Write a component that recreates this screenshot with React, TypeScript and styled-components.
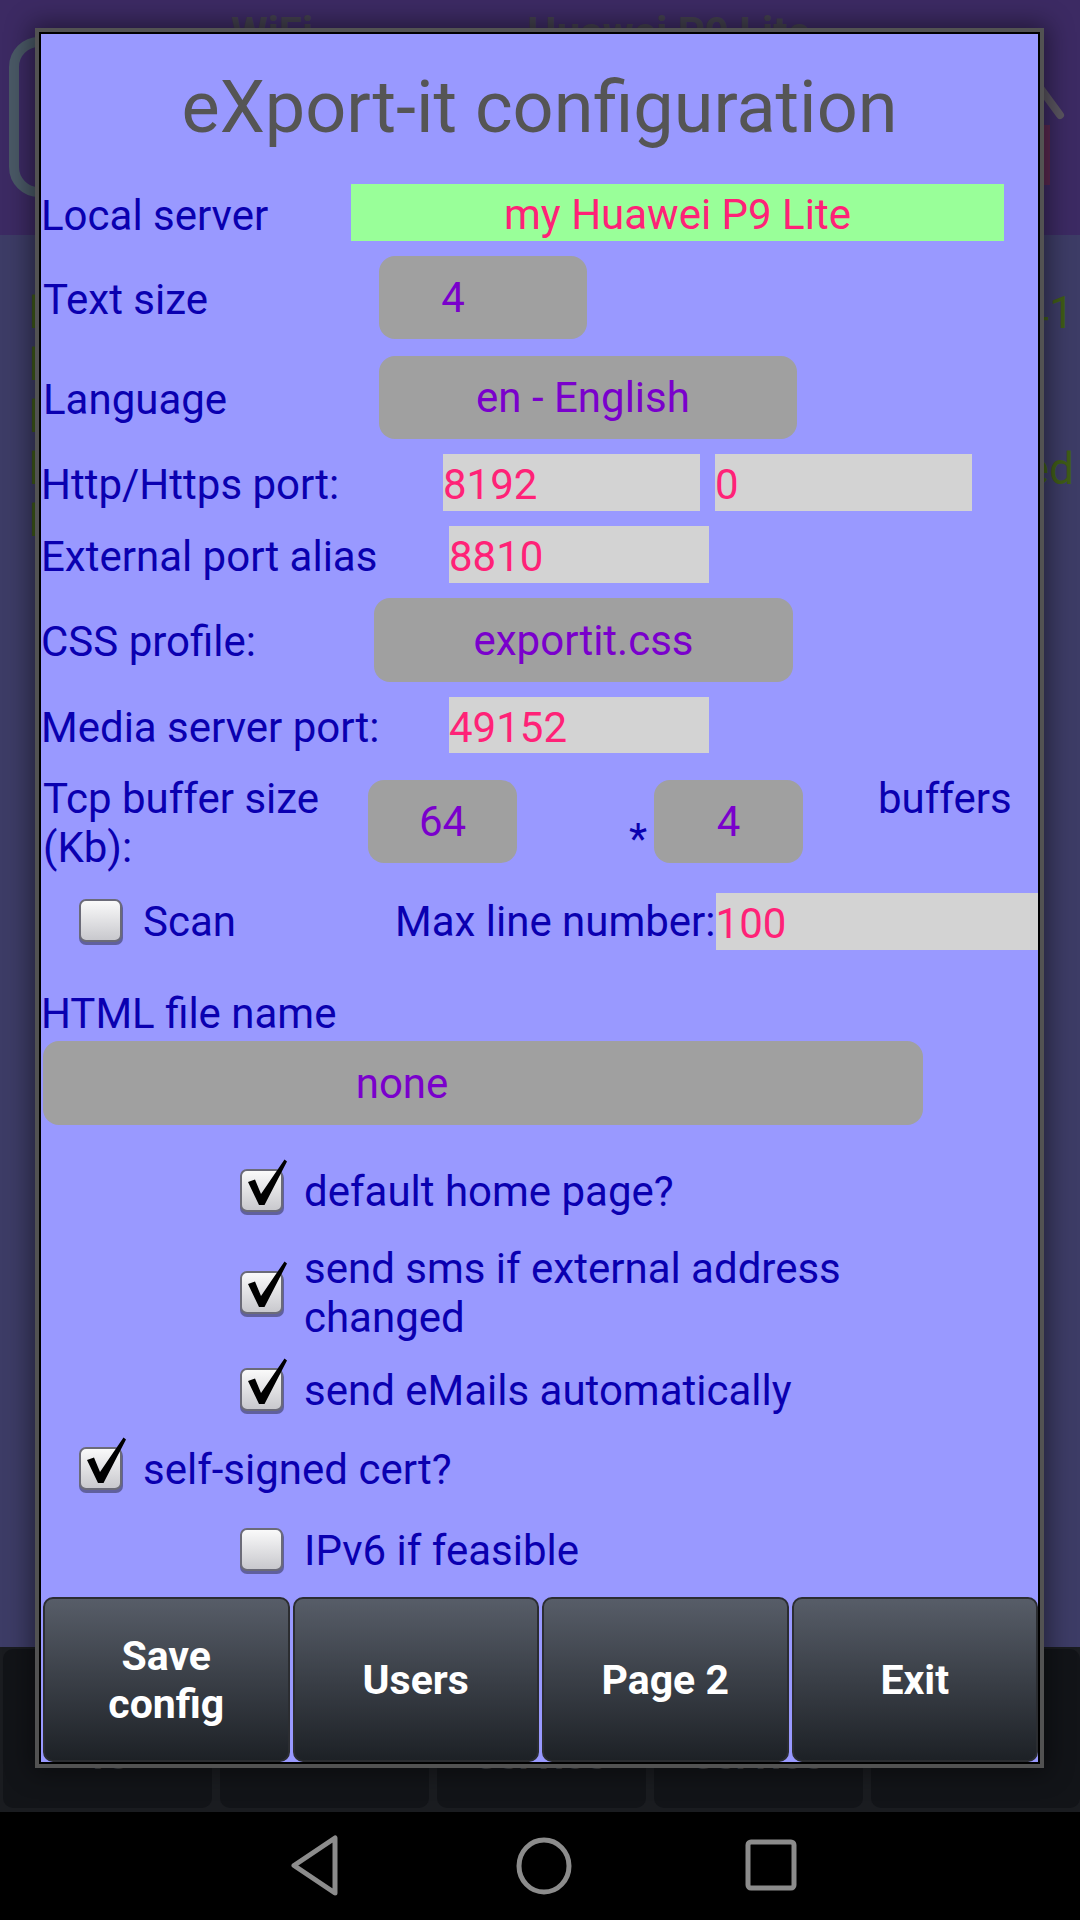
import React from "react";
import styled, { createGlobalStyle } from "styled-components";

const GlobalStyle = createGlobalStyle`
  html, body { margin: 0; padding: 0; background: #000; }
  body { font-family: Roboto, "Liberation Sans", sans-serif; }
  * { box-sizing: border-box; }
`;

const Screen = styled.div`
  position: relative;
  width: 1080px;
  height: 1920px;
  overflow: hidden;
  display: flex;
  flex-direction: column;
  font-family: Roboto, "Liberation Sans", sans-serif;
`;

/* ---------- background app (dimmed) ---------- */
const TopBar = styled.div`
  height: 235px;
  flex: none;
  background: #3c2a63;
  display: flex;
  align-items: flex-start;
  padding-left: 9px;
`;

const LogoBox = styled.div`
  margin-top: 37px;
  width: 130px;
  height: 160px;
  border: 10px solid #4a5966;
  border-radius: 30px;
`;

const TopText = styled.div<{ $ml: number }>`
  margin-left: ${(p) => p.$ml}px;
  margin-top: 8px;
  font-size: 42px;
  line-height: 50px;
  font-weight: 700;
  color: #413f4c;
`;

const TopIcon = styled.svg`
  margin-left: auto;
  margin-top: 55px;
  margin-right: 10px;
`;

const ContentArea = styled.div`
  flex: 1;
  background: #3d3c66;
  padding-top: 52px;
`;

const GhostLine = styled.div`
  display: flex;
  justify-content: space-between;
  padding: 0 6px 0 29px;
  font-size: 44px;
  line-height: 52px;
  height: 52px;
  color: #3f5c17;
`;

const BottomBar = styled.div`
  height: 165px;
  flex: none;
  background: #1a1c20;
  display: flex;
  gap: 8px;
  padding: 2px 0 4px 3px;
`;

const Tile = styled.div`
  flex: 1;
  background: #121418;
  border-radius: 10px;
  padding-top: 83px;
  text-align: center;
  font-size: 40px;
  font-weight: 700;
  line-height: 48px;
  color: #3c3d40;
`;

const NavBar = styled.div`
  height: 108px;
  flex: none;
  background: #000;
  display: flex;
  align-items: center;
  justify-content: center;
  gap: 170px;
  padding-left: 8px;
`;

/* ---------- dialog ---------- */
const Dialog = styled.div`
  position: absolute;
  left: 39px;
  top: 32px;
  width: 1001px;
  height: 1732px;
  border: 2px solid #000;
  background: #9999ff;
  box-shadow: 0 0 0 4px #525252, 0 0 24px 8px rgba(0, 0, 0, 0.45);
  display: flex;
  flex-direction: column;
  padding-top: 26px;
`;

const Title = styled.div`
  font-size: 72px;
  line-height: 96px;
  color: #555555;
  text-align: center;
`;

const Row = styled.div<{ $h: number; $mt: number; $top?: boolean }>`
  display: flex;
  align-items: ${(p) => (p.$top ? "flex-start" : "center")};
  height: ${(p) => p.$h}px;
  margin-top: ${(p) => p.$mt}px;
  flex: none;
`;

const Label = styled.div<{ $w?: number; $ml?: number; $pt?: number }>`
  ${(p) => (p.$w ? `width: ${p.$w}px; flex: none;` : "")}
  margin-left: ${(p) => p.$ml ?? 0}px;
  padding-top: ${(p) => p.$pt ?? 0}px;
  font-size: 42px;
  line-height: 49px;
  color: #0a00b0;
`;

const TextBox = styled.div<{ $w?: number; $bg: string; $center?: boolean; $ml?: number }>`
  ${(p) => (p.$w ? `width: ${p.$w}px; flex: none;` : "flex: 1;")}
  margin-left: ${(p) => p.$ml ?? 0}px;
  height: 100%;
  background: ${(p) => p.$bg};
  color: #ff2277;
  font-size: 42px;
  line-height: 49px;
  display: flex;
  align-items: center;
  padding-top: 4px;
  justify-content: ${(p) => (p.$center ? "center" : "flex-start")};
`;

const Spinner = styled.div<{ $w: number; $ml?: number; $pr?: number; $mt?: number; $h?: number }>`
  width: ${(p) => p.$w}px;
  height: ${(p) => (p.$h ? `${p.$h}px` : "100%")};
  flex: none;
  margin-left: ${(p) => p.$ml ?? 0}px;
  margin-top: ${(p) => p.$mt ?? 0}px;
  padding-right: ${(p) => p.$pr ?? 0}px;
  background: #a0a0a0;
  border-radius: 16px;
  color: #7a00cc;
  font-size: 42px;
  line-height: 49px;
  display: flex;
  align-items: center;
  justify-content: center;
`;

const Asterisk = styled.div`
  margin-left: 112px;
  margin-top: 44px;
  font-size: 42px;
  line-height: 42px;
  color: #0a00b0;
  width: 18px;
  flex: none;
`;

const CheckSvg = styled.svg<{ $ml: number }>`
  flex: none;
  overflow: visible;
  margin-left: ${(p) => p.$ml}px;
`;

const CheckText = styled.div`
  margin-left: 20px;
  font-size: 42px;
  line-height: 49px;
  color: #0a00b0;
`;

const ScanGroup = styled.div`
  width: 354px;
  flex: none;
  display: flex;
  align-items: center;
`;

const ButtonBar = styled.div`
  margin-top: auto;
  height: 165px;
  display: flex;
  gap: 3px;
  padding-left: 2px;
  flex: none;
`;

const DialogButton = styled.div`
  flex: 1;
  border: 2px solid #2b2d31;
  border-radius: 10px;
  background: linear-gradient(#575d68, #1d2126);
  color: #fff;
  font-weight: 700;
  font-size: 41px;
  line-height: 48px;
  display: flex;
  align-items: center;
  justify-content: center;
  text-align: center;
`;

const CheckIcon = ({ checked, ml }: { checked: boolean; ml: number }) => (
  <CheckSvg $ml={ml} width={44} height={45} viewBox="0 0 44 45">
    <defs>
      <linearGradient id="cbfill" x1="0" y1="0" x2="0" y2="1">
        <stop offset="0" stopColor="#fbfbfb" />
        <stop offset="1" stopColor="#c7c7cc" />
      </linearGradient>
    </defs>
    <rect x="0" y="2" width="44" height="44" rx="7" fill="#4d4d7e" opacity="0.75" />
    <rect x="1" y="1" width="41" height="41" rx="6" fill="url(#cbfill)" stroke="#6b6b78" strokeWidth="2" />
    {checked && (
      <path d="M8 13 L15 10.5 L21 25 L44.5 -9.5 L47 -7.5 L24.5 36 L19 36 Z" fill="#000" />
    )}
  </CheckSvg>
);

export default function App() {
  return (
    <>
      <GlobalStyle />
      <Screen>
        <TopBar>
          <LogoBox />
          <TopText $ml={92}>WiFi</TopText>
          <TopText $ml={214}>Huawei P9 Lite</TopText>
          <TopIcon width="40" height="140" viewBox="0 0 40 140">
            <path d="M8 30 L30 60" stroke="#5a5560" strokeWidth="8" strokeLinecap="round" />
            <path d="M6 70 L20 70 L20 130 L6 130 Z" fill="#5a2850" />
          </TopIcon>
        </TopBar>
        <ContentArea>
          <GhostLine><span>l</span><span>41</span></GhostLine>
          <GhostLine><span>l</span></GhostLine>
          <GhostLine><span>l</span></GhostLine>
          <GhostLine><span>l</span><span>ed</span></GhostLine>
          <GhostLine><span>l</span></GhostLine>
        </ContentArea>
        <BottomBar>
          <Tile>To</Tile>
          <Tile />
          <Tile>service</Tile>
          <Tile>service</Tile>
          <Tile />
        </BottomBar>
        <NavBar>
          <svg width="56" height="64" viewBox="0 0 56 64">
            <path d="M47 4 L47 59 L6 31.5 Z" fill="none" stroke="#8c8c8c" strokeWidth="5" strokeLinejoin="round" />
          </svg>
          <svg width="60" height="60" viewBox="0 0 60 60">
            <ellipse cx="30" cy="30" rx="25" ry="26" fill="none" stroke="#8c8c8c" strokeWidth="5" />
          </svg>
          <svg width="56" height="56" viewBox="0 0 56 56">
            <rect x="4" y="4" width="46" height="46" rx="3" fill="none" stroke="#8c8c8c" strokeWidth="5" />
          </svg>
        </NavBar>

        <Dialog>
          <Title>eXport-it configuration</Title>

          <Row $h={57} $mt={28}>
            <Label $w={310} $pt={5}>Local server</Label>
            <TextBox $w={653} $bg="#99ff99" $center>my Huawei P9 Lite</TextBox>
          </Row>

          <Row $h={83} $mt={15}>
            <Label $w={336} $ml={2} $pt={4}>Text size</Label>
            <Spinner $w={208} $pr={60}>4</Spinner>
          </Row>

          <Row $h={83} $mt={17}>
            <Label $w={336} $ml={2} $pt={4}>Language</Label>
            <Spinner $w={418} $pr={10}>en - English</Spinner>
          </Row>

          <Row $h={57} $mt={15}>
            <Label $w={402} $pt={4}>Http/Https port:</Label>
            <TextBox $w={257} $bg="#d3d3d3">8192</TextBox>
            <TextBox $w={257} $bg="#d3d3d3" $ml={15}>0</TextBox>
          </Row>

          <Row $h={57} $mt={15}>
            <Label $w={408} $pt={3}>External port alias</Label>
            <TextBox $w={260} $bg="#d3d3d3">8810</TextBox>
          </Row>

          <Row $h={84} $mt={15}>
            <Label $w={333} $pt={3}>CSS profile:</Label>
            <Spinner $w={419}>exportit.css</Spinner>
          </Row>

          <Row $h={56} $mt={15}>
            <Label $w={408} $pt={4}>Media server port:</Label>
            <TextBox $w={260} $bg="#d3d3d3">49152</TextBox>
          </Row>

          <Row $h={89} $mt={21} $top>
            <Label $w={325} $ml={2}>Tcp buffer size (Kb):</Label>
            <Spinner $w={149} $h={83} $mt={6}>64</Spinner>
            <Asterisk>*</Asterisk>
            <Spinner $w={149} $h={83} $mt={6} $ml={7}>4</Spinner>
            <Label $ml={75}>buffers</Label>
          </Row>

          <Row $h={57} $mt={30}>
            <ScanGroup>
              <CheckIcon checked={false} ml={38} />
              <CheckText>Scan</CheckText>
            </ScanGroup>
            <Label>Max line number:</Label>
            <TextBox $bg="#d3d3d3">100</TextBox>
          </Row>

          <Row $h={49} $mt={39}>
            <Label>HTML file name</Label>
          </Row>

          <Row $h={84} $mt={3}>
            <Spinner $w={880} $ml={2} $pr={162}>none</Spinner>
          </Row>

          <Row $h={49} $mt={42}>
            <CheckIcon checked ml={199} />
            <CheckText>default home page?</CheckText>
          </Row>

          <Row $h={98} $mt={28}>
            <CheckIcon checked ml={199} />
            <CheckText>send sms if external address<br />changed</CheckText>
          </Row>

          <Row $h={49} $mt={24}>
            <CheckIcon checked ml={199} />
            <CheckText>send eMails automatically</CheckText>
          </Row>

          <Row $h={49} $mt={30}>
            <CheckIcon checked ml={38} />
            <CheckText>self-signed cert?</CheckText>
          </Row>

          <Row $h={49} $mt={32}>
            <CheckIcon checked={false} ml={199} />
            <CheckText>IPv6 if feasible</CheckText>
          </Row>

          <ButtonBar>
            <DialogButton>Save<br />config</DialogButton>
            <DialogButton>Users</DialogButton>
            <DialogButton>Page 2</DialogButton>
            <DialogButton>Exit</DialogButton>
          </ButtonBar>
        </Dialog>
      </Screen>
    </>
  );
}
